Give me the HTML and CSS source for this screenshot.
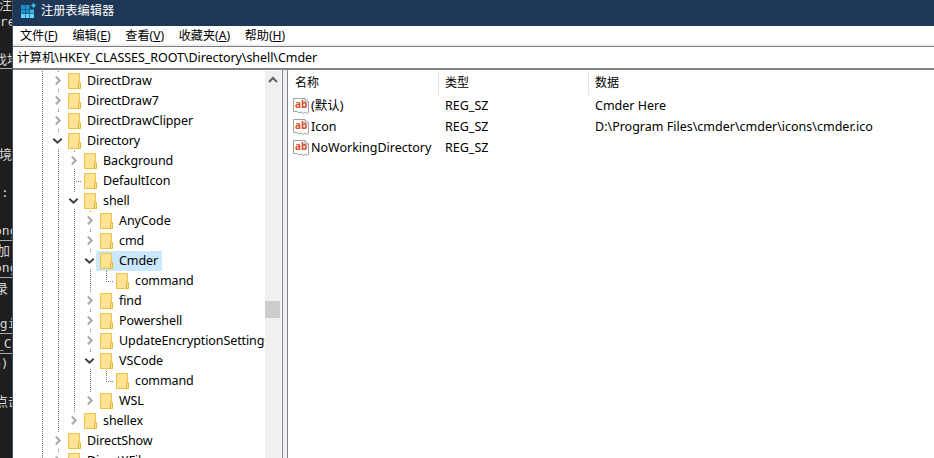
FILE: index.html
```html
<!DOCTYPE html>
<html lang="zh-CN">
<head>
<meta charset="utf-8">
<title>注册表编辑器</title>
<link rel="stylesheet" href="styles.css">
</head>
<body>
<svg width="0" height="0" class="defs">
  <symbol id="folder" viewBox="0 0 14 16"><path d="M.5.5h11v15H.5z" fill="#ffe395" stroke="#ebc34a"/><path d="M10.500 15.500v-6h2v6z" fill="#ffe28b" stroke="#e5b934"/></symbol>
  <symbol id="closed" viewBox="0 0 10 10"><path d="M3.500 1.500l3.500 3.500-3.500 3.500" fill="none" stroke="#a6a6a6" stroke-width="1.800"/></symbol>
  <symbol id="open" viewBox="0 0 10 10"><path d="M1.200 3.500l3.800 3.500 3.800-3.500" fill="none" stroke="#404040" stroke-width="1.800"/></symbol>
  <symbol id="string" viewBox="0 0 16 16"><path d="M.5.5h11.500l3.500 3.500v10.500l-1.500 1-2-1.500-2 1.500-2-1.500-2 1-2-1.500H.5z" fill="#fff" stroke="#a0a0a0"/><path d="M12 .5V4h3.500" fill="none" stroke="#a0a0a0"/></symbol>
</svg>
<div class="screen">
  <div class="behind">
    <p style="--x:-1px;--y:-5px">注</p><p class="mono" style="--x:-8px;--y:13px">ore</p>
    <p class="line" style="--x:-6px;--y:50px">找地</p><p style="--x:-1px;--y:145px">境</p><p class="mono" style="--x:1px;--y:184px">:</p>
    <p class="mono line" style="--x:-6px;--y:222px">ong</p><p style="--x:-3px;--y:241px">加</p><p class="mono line" style="--x:-6px;--y:259px">ong</p><p style="--x:-5px;--y:279px">录</p>
    <p class="mono line" style="--x:-8px;--y:315px">ngi</p><p class="mono line" style="--x:-4px;--y:335px">_C</p><p class="mono" style="--x:-7px;--y:355px"><i>e</i>)</p><p style="--x:-5px;--y:392px">点击</p>
  </div>
  <main class="window">
    <header class="title">
      <svg width="16" height="16" viewBox="0 0 16 16"><path fill="#1a94cf" d="M0 2h4v4H0zM4.500 2h4v4h-4zM0 6.500h4v4H0zM4.500 6.500h4v4h-4z"/><path fill="#35b7e8" d="M9 6.500h4v4H9z"/><path fill="#5fd6fa" d="M0 11h4v4H0zM4.500 11h4v4h-4zM9 11h4v4H9z"/><path d="M12.500 0L15 2.500 12.500 5 10 2.500z" fill="#3fb9e6"/></svg>
      <span>注册表编辑器</span>
    </header>
    <nav class="menu"><span>文件(<u>F</u>)</span><span>编辑(<u>E</u>)</span><span>查看(<u>V</u>)</span><span>收藏夹(<u>A</u>)</span><span>帮助(<u>H</u>)</span></nav>
    <div class="address">计算机\HKEY_CLASSES_ROOT\Directory\shell\Cmder</div>
    <div class="panes">
      <section class="tree" id="tree"></section>
      <div class="scroll"><svg width="10" height="7" viewBox="0 0 10 7"><path d="M1 6l4-4 4 4" fill="none" stroke="#606060" stroke-width="2"/></svg><div class="thumb"></div></div>
      <div class="splitter"></div>
      <section class="values">
        <div class="row head"><span>名称</span><span>类型</span><span>数据</span></div>
        <div class="row"><span><b class="ab"><svg><use href="#string"/></svg><em>ab</em></b>(默认)</span><span>REG_SZ</span><span>Cmder Here</span></div>
        <div class="row"><span><b class="ab"><svg><use href="#string"/></svg><em>ab</em></b>Icon</span><span>REG_SZ</span><span>D:\Program Files\cmder\cmder\icons\cmder.ico</span></div>
        <div class="row"><span><b class="ab"><svg><use href="#string"/></svg><em>ab</em></b>NoWorkingDirectory</span><span>REG_SZ</span><span></span></div>
      </section>
    </div>
  </main>
</div>
<script src="tree.js"></script>
</body>
</html>
```
FILE: styles.css
```css
* { box-sizing: border-box; }
body { margin: 0; overflow: hidden; background: #1e1e1e; font: 12.5px/20px "Noto Sans", "Noto Sans CJK SC", sans-serif; color: #000; }
.defs { position: absolute; }
.screen { display: flex; width: 934px; height: 458px; }
.behind { position: relative; flex: 0 0 12px; overflow: hidden; background: #1e1e1e; color: #d4d4d4; }
.behind p { position: absolute; top: var(--y); left: var(--x); height: 19px; margin: 0; font-size: 13px; line-height: 18px; white-space: nowrap; }
.behind .mono { font-family: "DejaVu Sans Mono", monospace; }
.behind .line { border-bottom: 1px solid #aaa; }
.behind i { color: #ce9178; font-style: normal; }
.window { flex: 1; min-width: 0; display: flex; flex-direction: column; border-left: 1px solid #3c4d6c; background: #fff; }
.title { display: flex; flex: 0 0 26px; background: #1f3756; color: #fff; padding: 0 0 3px 8px; gap: 4px; font-size: 12.2px; line-height: 22px; }
.title svg { margin-top: 3px; }
.menu { display: flex; flex: 0 0 20px; height: 20px; min-height: 0; padding-left: 7px; border-bottom: 2px solid #f0f0f0; font-size: 12.1px; line-height: 20px; white-space: nowrap; }
.menu span { flex: 0 0 auto; margin-right: 14.7px; }
.menu u { text-underline-offset: 1px; }
.address { flex: 0 0 24px; min-height: 0; border-top: 1px solid #7b7b7b; border-bottom: 2px solid #828287; padding-left: 4px; line-height: 21px; letter-spacing: -.06px; white-space: nowrap; }
.panes { display: flex; flex: 1; min-height: 0; }
.tree { flex: 0 0 252px; overflow: hidden; padding-top: 1px; letter-spacing: -.1px; }
.node { display: flex; height: 20px; align-items: center; white-space: nowrap; }
.guide { position: relative; flex: 0 0 16px; height: 20px; }
.guide.lead { flex-basis: 22px; }
.guide.v::before { content: ""; position: absolute; left: 7px; top: 0; height: 20px; width: 1px; background: repeating-linear-gradient(#777 0 1px, transparent 1px 2px); }
.guide.end::before { height: 10px; }
.guide.h::after { content: ""; position: absolute; left: 7px; top: 10px; width: 7px; height: 1px; background: repeating-linear-gradient(90deg, #777 0 1px, transparent 1px 2px); }
.guide svg { position: absolute; left: 1px; top: 1px; width: 11px; height: 17px; background: #fff; }
.folder { flex: none; width: 14px; height: 16px; margin: 0 5px 0 0; }
.name { display: flex; align-items: center; height: 20px; margin-left: -3px; padding: 0 4px; }
.name.selected { background: #cce8ff; }
.scroll { display: flex; flex-direction: column; flex: 0 0 16px; align-items: flex-start; background: #f0f0f0; border-top: 1px solid #fff; }
.scroll svg { flex: none; margin: 5px 0 0 3px; }
.thumb { width: 15px; height: 17px; margin-top: 218px; background: #cdcdcd; }
.splitter { flex: 0 0 6px; margin-left: 1px; border: solid #828790; border-width: 0 1px 0 1px; background: #f0f0f0; }
.values { flex: 1; padding-top: 1px; }
.row { display: grid; grid-template-columns: 151px 150px 1fr; height: 21px; line-height: 21px; white-space: nowrap; }
.row > span { display: flex; align-items: center; padding-left: 6px; }
.row > span:first-child { padding-left: 5px; }
.row.head { height: 24px; line-height: 24px; font-size: 12px; }
.row.head > span { border-right: 1px solid #e5e5e5; }
.row.head > span:first-child { padding-left: 7px; }
.row.head > span:last-child { border: 0; }
.ab { position: relative; flex: none; width: 16px; height: 16px; margin-right: 2px; }
.ab svg { display: block; width: 16px; height: 16px; }
.ab em { position: absolute; left: 2px; top: 0; font: bold 10px/13px "Open Sans", sans-serif; color: #d64a28; }
```
FILE: tree.js
```js
// Each entry: depth, state (c closed, o open, n leaf, l last leaf, e last closed), label
const nodes = [
  [1,'c','DirectDraw'],[1,'c','DirectDraw7'],[1,'c','DirectDrawClipper'],[1,'o','Directory'],
  [2,'c','Background'],[2,'n','DefaultIcon'],[2,'o','shell'],
  [3,'c','AnyCode'],[3,'c','cmd'],[3,'o','Cmder'],[4,'l','command'],[3,'c','find'],[3,'c','Powershell'],
  [3,'c','UpdateEncryptionSettings'],[3,'o','VSCode'],[4,'l','command'],[3,'e','WSL'],[2,'e','shellex'],
  [1,'c','DirectShow'],[1,'c','DirectXFile']
];
document.getElementById('tree').innerHTML = nodes.map(([depth, state, label]) => {
  let html = '<div class="node"><span class="guide lead"></span>';
  for (let i = 0; i < depth; i++) html += '<span class="guide v"></span>';
  const end = state === 'l' || state === 'e' ? ' end' : '';
  const icon = state === 'c' || state === 'e' ? 'closed' : state === 'o' ? 'open' : '';
  html += `<span class="guide v${end}${icon ? '' : ' h'}">${icon ? `<svg viewBox="0 0 10 10"><use href="#${icon}"/></svg>` : ''}</span>`;
  return html + `<span class="name${label === 'Cmder' ? ' selected' : ''}"><svg class="folder"><use href="#folder"/></svg>${label}</span></div>`;
}).join('');
```
